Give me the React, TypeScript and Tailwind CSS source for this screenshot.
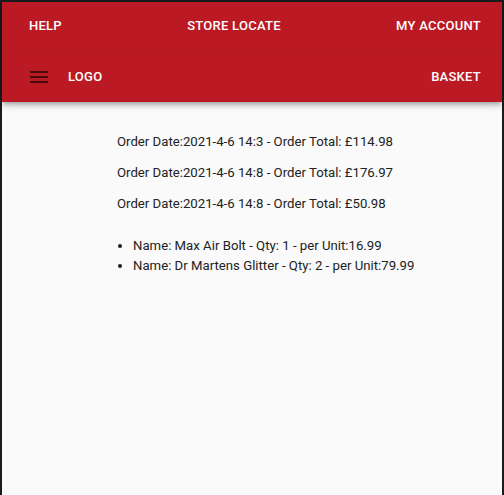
import React from "react";

const orders = [
    { date: "2021-4-6 14:3", total: "114.98" },
    { date: "2021-4-6 14:8", total: "176.97" },
    { date: "2021-4-6 14:8", total: "50.98" },
];

const items = [
    { name: "Max Air Bolt", qty: 1, unit: "16.99" },
    { name: "Dr Martens Glitter", qty: 2, unit: "79.99" },
];

function MenuIcon() {
    return (
        <svg width="18" height="12" viewBox="0 0 18 12" className="text-black/60">
            <rect x="0" y="0" width="18" height="2" fill="currentColor" />
            <rect x="0" y="5" width="18" height="2" fill="currentColor" />
            <rect x="0" y="10" width="18" height="2" fill="currentColor" />
        </svg>
    );
}

export default function App() {
    return (
        <div className="h-[495px] w-[504px] bg-[#1b1b1b] px-[2px] pt-[2px] font-['Roboto',sans-serif]">
            <div className="flex h-full flex-col bg-[#fafafa]">
                <header className="relative z-10 bg-[#bb1a25] text-[13px] font-medium uppercase tracking-[0.02em] text-white shadow-[0_2px_4px_-1px_rgba(0,0,0,0.2),0_4px_5px_0_rgba(0,0,0,0.14),0_1px_10px_0_rgba(0,0,0,0.12)]">
                    <div className="flex h-[48px] items-center justify-between border-b border-[#b11821] pl-[27px] pr-[21px] pt-[1px]">
                        <span>Help</span>
                        <span className="pl-[10px]">Store Locate</span>
                        <span>My Account</span>
                    </div>
                    <div className="flex h-[52px] items-center justify-between pl-[27px] pr-[21px] pt-[2px]">
                        <div className="flex items-center gap-[20px] pl-px">
                            <MenuIcon />
                            <span>Logo</span>
                        </div>
                        <span>Basket</span>
                    </div>
                </header>
                <main className="pl-[115px] pt-[31px] text-[13.2px] text-[#222]">
                    {orders.map((o, i) => (
                        <p key={i} className="mb-[13px] leading-[18px]">
                            Order Date:{o.date} - Order Total: £{o.total}
                        </p>
                    ))}
                    <ul className="mt-[23px] list-disc pl-[16px] leading-[20px]">
                        {items.map((it, i) => (
                            <li key={i}>
                                Name: {it.name} - Qty: {it.qty} - per Unit:{it.unit}
                            </li>
                        ))}
                    </ul>
                </main>
            </div>
        </div>
    );
}
